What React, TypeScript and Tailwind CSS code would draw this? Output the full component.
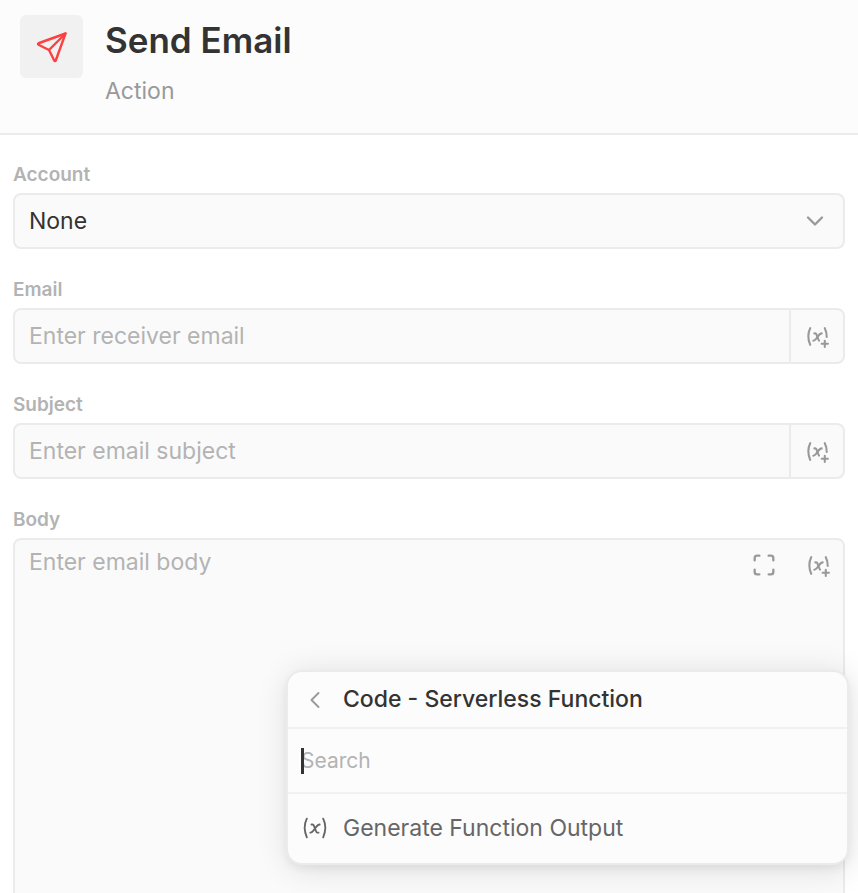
import { useState, type ReactNode } from "react";
import {
  TbChevronDown,
  TbChevronLeft,
  TbMaximize,
  TbSend,
  TbVariable,
  TbVariablePlus,
} from "react-icons/tb";

const fieldBox = "rounded-lg border-2 border-[#ebebeb] bg-[#fafafa]";
const fieldText =
  "text-[23px] leading-8 text-[#333333] placeholder:text-[#b3b3b3] outline-none";

function Field({ id, label, children }: { id: string; label: string; children: ReactNode }) {
  return (
    <div>
      <label
        htmlFor={id}
        className="mb-1.5 block text-[19px] leading-6 font-semibold text-[#b3b3b3]"
      >
        {label}
      </label>
      {children}
    </div>
  );
}

function VariableInput({ id, placeholder }: { id: string; placeholder: string }) {
  return (
    <div className={`flex h-14 overflow-hidden ${fieldBox}`}>
      <input
        id={id}
        type="text"
        placeholder={placeholder}
        className={`min-w-0 flex-1 px-3.5 ${fieldText}`}
      />
      <button
        type="button"
        aria-label="Insert variable"
        className="flex w-[54px] items-center justify-center border-l-2 border-[#ebebeb] text-[#999999]"
      >
        <TbVariablePlus size={25} />
      </button>
    </div>
  );
}

function VariablePicker() {
  const [query, setQuery] = useState("");
  const options = ["Generate Function Output"].filter((o) =>
    o.toLowerCase().includes(query.toLowerCase()),
  );

  return (
    <div className="absolute top-[132px] -right-1 w-[563px] rounded-2xl border-2 border-[#ebebeb] bg-[#fcfcfc] shadow-[2px_4px_32px_rgba(0,0,0,0.12),0_4px_8px_rgba(0,0,0,0.05)]">
      <div className="flex h-[55px] items-center gap-3.5 px-[13px]">
        <button
          type="button"
          aria-label="Back"
          className="flex w-7 justify-center text-[#999999]"
        >
          <TbChevronLeft size={28} strokeWidth={1.6} />
        </button>
        <h2 className="text-[23px] font-medium text-[#333333]">Code - Serverless Function</h2>
      </div>
      <div className="relative flex h-[67px] items-center border-y-2 border-[#f1f1f1] px-[13px]">
        {query === "" && <span className="absolute left-[13px] h-[26px] w-[3px] bg-[#333333]" />}
        <input
          type="text"
          aria-label="Search"
          placeholder="Search"
          value={query}
          onChange={(e) => setQuery(e.target.value)}
          className="w-full text-[21px] text-[#333333] caret-transparent outline-none placeholder:text-[#b3b3b3]"
        />
      </div>
      <ul className="pt-2 pb-[9px]">
        {options.map((option) => (
          <li key={option}>
            <button
              type="button"
              className="flex h-13 w-full items-center gap-3.5 px-[13px] text-[23px] text-[#666666]"
            >
              <TbVariable size={28} strokeWidth={1.6} />
              {option}
            </button>
          </li>
        ))}
      </ul>
    </div>
  );
}

export default function App() {
  return (
    <main className="h-screen overflow-hidden bg-white font-['Inter',sans-serif]">
      <header className="flex gap-[22px] border-b-2 border-[#ebebeb] bg-[#fcfcfc] px-5 pt-[15px] pb-6">
        <div className="flex size-[63px] shrink-0 items-center justify-center rounded-md bg-[#f1f1f1] text-[#ff4040]">
          <TbSend size={36} strokeWidth={1.6} />
        </div>
        <div>
          <h1 className="text-[35px] leading-[50px] font-semibold text-[#333333]">Send Email</h1>
          <p className="mt-2 text-[23px] leading-9 text-[#999999]">Action</p>
        </div>
      </header>

      <form className="flex flex-col gap-[29px] px-[13px] pt-7">
        <Field id="account" label="Account">
          <div className="relative">
            <select id="account" className={`h-14 w-full appearance-none px-3.5 ${fieldBox} ${fieldText}`}>
              <option>None</option>
            </select>
            <TbChevronDown
              size={28}
              className="pointer-events-none absolute inset-y-0 right-4 my-auto text-[#999999]"
            />
          </div>
        </Field>

        <Field id="email" label="Email">
          <VariableInput id="email" placeholder="Enter receiver email" />
        </Field>

        <Field id="subject" label="Subject">
          <VariableInput id="subject" placeholder="Enter email subject" />
        </Field>

        <Field id="body" label="Body">
          <div className="relative">
            <div className={`flex h-[480px] ${fieldBox}`}>
              <textarea
                id="body"
                placeholder="Enter email body"
                className={`min-w-0 flex-1 resize-none px-3.5 py-1.5 ${fieldText}`}
              />
              <div className="flex h-[50px] items-center gap-7 pr-3 text-[#999999]">
                <button type="button" aria-label="Expand">
                  <TbMaximize size={28} />
                </button>
                <button type="button" aria-label="Insert variable">
                  <TbVariablePlus size={25} />
                </button>
              </div>
            </div>
            <VariablePicker />
          </div>
        </Field>
      </form>
    </main>
  );
}
